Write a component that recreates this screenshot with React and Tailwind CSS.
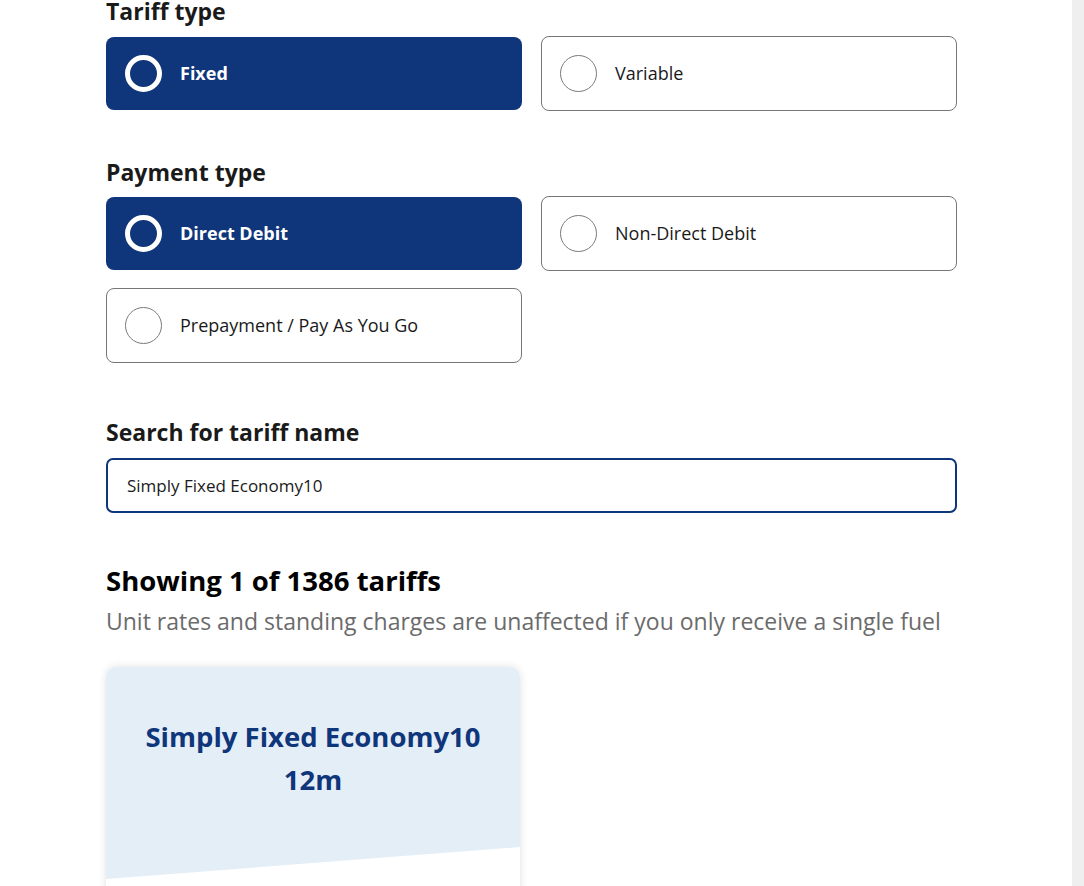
import React from "react";

function Radio({ label, selected }) {
  if (selected) {
    return (
      <div className="flex h-[73px] items-center rounded-[8px] bg-[#0f357a] pl-[19px]">
        <span className="box-border h-[37px] w-[37px] rounded-full border-[5px] border-white" />
        <span className="ml-[18px] text-[18px] font-bold text-white">{label}</span>
      </div>
    );
  }
  return (
    <div className="flex h-[75px] items-center rounded-[8px] border border-[#767676] bg-white pl-[18px]">
      <span className="box-border h-[37px] w-[37px] rounded-full border border-[#7a7a7a]" />
      <span className="ml-[18px] text-[18px] text-[#1a1a1a]">{label}</span>
    </div>
  );
}

export default function App() {
  return (
    <div
      className="relative h-[886px] w-[1084px] overflow-hidden bg-white"
      style={{ fontFamily: '"Open Sans", "Noto Sans", sans-serif' }}
    >
      <div className="absolute right-0 top-0 h-full w-[12px] bg-[#efefef]" />
      <div className="ml-[106px] mt-[-4px] w-[851px]">
        <h2 className="text-[23px] font-bold leading-[30px] text-[#1a1a1a]">Tariff type</h2>
        <div className="mt-[10px] grid grid-cols-2 items-center gap-x-[19px] gap-y-[17px]">
          <Radio label="Fixed" selected />
          <Radio label="Variable" />
        </div>

        <h2 className="mt-[46px] text-[23px] font-bold leading-[30px] text-[#1a1a1a]">Payment type</h2>
        <div className="mt-[9px] grid grid-cols-2 items-center gap-x-[19px] gap-y-[17px]">
          <Radio label="Direct Debit" selected />
          <Radio label="Non-Direct Debit" />
          <Radio label="Prepayment / Pay As You Go" />
        </div>

        <h2 className="mt-[54px] text-[23px] font-bold leading-[30px] text-[#1a1a1a]">Search for tariff name</h2>
        <div className="mt-[11px] flex h-[55px] items-center rounded-[7px] border-2 border-[#0f357a] px-[19px] text-[17px] text-[#1a1a1a]">
          Simply Fixed Economy10
        </div>

        <h2 className="mt-[50px] text-[27.5px] font-bold leading-[36px] text-black">Showing 1 of 1386 tariffs</h2>
        <p className="mt-[7px] text-[23px] leading-[30px] text-[#6b6b6b]">
          Unit rates and standing charges are unaffected if you only receive a single fuel
        </p>

        <div className="mt-[31px] h-[260px] w-[414px] overflow-hidden rounded-t-[10px] bg-white shadow-[0_0_8px_rgba(0,0,0,0.12)]">
          <div className="relative h-[212px] bg-[#e4eef7]">
            <div className="px-[20px] pt-[48px] text-center text-[27.5px] font-bold leading-[43px] text-[#0f357a]">
              Simply Fixed Economy10 12m
            </div>
            <svg className="absolute bottom-0 left-0" width="414" height="34" viewBox="0 0 414 34" preserveAspectRatio="none">
              <polygon points="0,34 414,2 414,34" fill="#ffffff" />
            </svg>
          </div>
        </div>
      </div>
    </div>
  );
}
